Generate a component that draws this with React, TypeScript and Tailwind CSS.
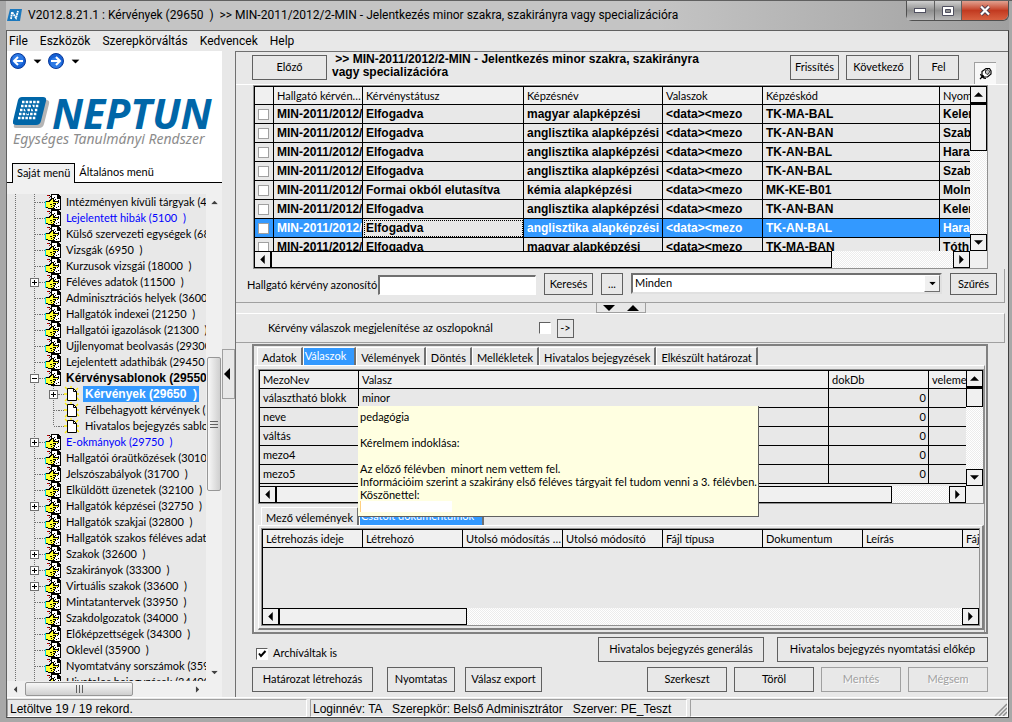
import { useId } from "react";
import type { ReactNode } from "react";

type TreeItem = {
    label: string;
    child?: boolean;
    last?: boolean;
    node?: "plus" | "minus";
    look?: "blue" | "bold" | "selected";
};

const treeItems: TreeItem[] = [
    { label: "Intézményen kívüli tárgyak (4500  )" },
    { label: "Lejelentett hibák (5100  )", look: "blue" },
    { label: "Külső szervezeti egységek (6800  )" },
    { label: "Vizsgák (6950  )" },
    { label: "Kurzusok vizsgái (18000  )" },
    { label: "Féléves adatok (11500  )", node: "plus" },
    { label: "Adminisztrációs helyek (3600  )" },
    { label: "Hallgatók indexei (21250  )" },
    { label: "Hallgatói igazolások (21300  )" },
    { label: "Ujjlenyomat beolvasás (29300  )" },
    { label: "Lejelentett adathibák (29450  )" },
    { label: "Kérvénysablonok (29550  )", node: "minus", look: "bold" },
    { label: "Kérvények (29650  )", child: true, node: "plus", look: "selected" },
    { label: "Félbehagyott kérvények (29660  )", child: true },
    { label: "Hivatalos bejegyzés sablonok (29700  )", child: true, last: true },
    { label: "E-okmányok (29750  )", node: "plus", look: "blue" },
    { label: "Hallgatói óraütközések (30100  )" },
    { label: "Jelszószabályok (31700  )" },
    { label: "Elküldött üzenetek (32100  )" },
    { label: "Hallgatók képzései (32750  )", node: "plus" },
    { label: "Hallgatók szakjai (32800  )" },
    { label: "Hallgatók szakos féléves adatai (32850  )" },
    { label: "Szakok (32600  )", node: "plus" },
    { label: "Szakirányok (33300  )", node: "plus" },
    { label: "Virtuális szakok (33600  )", node: "plus" },
    { label: "Mintatantervek (33950  )" },
    { label: "Szakdolgozatok (34000  )" },
    { label: "Előképzettségek (34300  )" },
    { label: "Oklevél (35900  )" },
    { label: "Nyomtatvány sorszámok (35950  )" },
    { label: "Hivatalos bejegyzések (34400  )" },
];

const requests = [
    ["MIN-2011/2012/2", "Elfogadva", "magyar alapképzési", "<data><mezo", "TK-MA-BAL", "Kelemen"],
    ["MIN-2011/2012/2", "Elfogadva", "anglisztika alapképzési", "<data><mezo", "TK-AN-BAN", "Szabó"],
    ["MIN-2011/2012/2", "Elfogadva", "anglisztika alapképzési", "<data><mezo", "TK-AN-BAL", "Harangi"],
    ["MIN-2011/2012/2", "Elfogadva", "anglisztika alapképzési", "<data><mezo", "TK-AN-BAL", "Szabó"],
    ["MIN-2011/2012/2", "Formai okból elutasítva", "kémia alapképzési", "<data><mezo", "MK-KE-B01", "Molnár"],
    ["MIN-2011/2012/2", "Elfogadva", "anglisztika alapképzési", "<data><mezo", "TK-AN-BAN", "Kelemen"],
    ["MIN-2011/2012/2", "Elfogadva", "anglisztika alapképzési", "<data><mezo", "TK-AN-BAL", "Harangi"],
    ["MIN-2011/2012/2", "Elfogadva", "magyar alapképzési", "<data><mezo", "TK-MA-BAN", "Tóth"],
];
const selectedRow = 6;

const answers = [
    ["választható blokk", "minor"],
    ["neve", ""],
    ["váltás", ""],
    ["mezo4", ""],
    ["mezo5", ""],
];

const documentColumns = ["Létrehozás ideje", "Létrehozó", "Utolsó módosítás ideje", "Utolsó módosító", "Fájl típusa", "Dokumentum", "Leírás"];

const tooltipText = `pedagógia

Kérelmem indoklása:

Az előző félévben  minort nem vettem fel.
Információim szerint a szakirány első féléves tárgyait fel tudom venni a 3. félévben.
Köszönettel:`;

const Triangle = ({ dir, big }: { dir: "up" | "down" | "left" | "right"; big?: boolean }) => {
    const points = {
        up: "0,5 5,0 10,5",
        down: "0,0 10,0 5,5",
        left: "5,0 5,10 0,5",
        right: "0,0 5,5 0,10",
    };
    const tall = dir === "left" || dir === "right";
    const scale = big ? 1.2 : 0.9;
    const w = tall ? 5 : 10;
    const h = tall ? 10 : 5;
    return (
        <svg width={Math.round(w * scale)} height={Math.round(h * scale)} viewBox={`0 0 ${w} ${h}`} className="shrink-0">
            <polygon points={points[dir]} fill="currentColor" />
        </svg>
    );
};

const Btn = ({ children, className, disabled }: { children: ReactNode; className?: string; disabled?: boolean }) => (
    <button
        disabled={disabled}
        className={`border border-[#606060] bg-[#e8e8e8] whitespace-nowrap disabled:border-[#a0a0a0] disabled:text-[#a0a0a0] disabled:[text-shadow:1px_1px_0_#fff] ${className}`}
    >
        {children}
    </button>
);

const BarButton = ({ dir, label }: { dir: "up" | "down" | "left" | "right"; label: string }) => (
    <button aria-label={label} className="flex size-[17px] shrink-0 items-center justify-center border border-black bg-[#f0f0f0]">
        <Triangle dir={dir} />
    </button>
);

const track = "bg-[conic-gradient(#ffffff_25%,#ececec_0_50%,#ffffff_0_75%,#ececec_0)] bg-[length:2px_2px]";

const HBar = ({ thumb }: { thumb: string }) => (
    <div className={`flex h-[17px] ${track}`}>
        <BarButton dir="left" label="Balra" />
        <div className={`border border-black bg-[#f0f0f0] ${thumb}`} />
        <div className="flex-1" />
        <BarButton dir="right" label="Jobbra" />
    </div>
);

const VBar = ({ thumb }: { thumb: string }) => (
    <div className={`flex w-[17px] shrink-0 flex-col ${track}`}>
        <BarButton dir="up" label="Fel" />
        <div className={`border border-t-2 border-black bg-[#f0f0f0] ${thumb}`} />
        <div className="flex-1" />
        <BarButton dir="down" label="Le" />
    </div>
);

const Check = ({ id, checked }: { id: string; checked?: boolean }) => (
    <span className="grid size-3 shrink-0">
        <input
            id={id}
            type="checkbox"
            defaultChecked={checked}
            className="peer col-start-1 row-start-1 size-3 appearance-none border border-t-[#606060] border-r-white border-b-white border-l-[#606060] bg-white"
        />
        <svg viewBox="0 0 12 12" className="pointer-events-none invisible col-start-1 row-start-1 size-3 peer-checked:visible">
            <path d="M3 5.5 L5 8 L9.5 3" fill="none" stroke="#000" strokeWidth="2" />
        </svg>
    </span>
);

const HandIcon = () => (
    <svg width="16" height="16" viewBox="0 0 16 16" className="shrink-0" shapeRendering="crispEdges">
        <path d="M6 0h7l3 3v13H6z" fill="#000" />
        <path d="M7 1h5v3h3v11H7z" fill="#fff" />
        <path d="M12 1v3h3M9 3h1M13 6h1M10 5h1M12 9h1M13 12h1M11 13h1M9 14h1" stroke="#000" fill="none" />
        <path d="M0 7h3l4-3h2v3h5v2h-3v2h-1v2H9v2H3l-1-1H0z" fill="#000" />
        <path d="M1 8h3l3-3h1v3h5v1H8v1h2v1H8v1h1v1H8v1H3l-1-1H1z" fill="#ffff33" />
        <path d="M5 10h2M6 12h1" stroke="#000" />
        <path d="M0 7h1v7H0z" fill="#00e0e0" />
        <path d="M4 1l2 2 4 4" stroke="#000" fill="none" />
        <path d="M2 1h2v1H2zM4 3h1v1H4z" fill="#c00000" />
    </svg>
);

const PageIcon = () => (
    <svg width="16" height="16" viewBox="0 0 16 16" className="shrink-0">
        <path d="M1 1l3 3M14 2l-3 3M0 8h4M15 8h-4M1 15l3-3M15 14l-3-3M7 0v3" stroke="#ffee00" strokeWidth="1.3" />
        <path d="M3.5 2.5h6l3 3v9h-9z" fill="#fff" stroke="#000" />
        <path d="M9.500 2.500v3h3" fill="none" stroke="#000" />
    </svg>
);

const TreeRow = ({ item }: { item: TreeItem }) => {
    const looks = {
        blue: "text-[#0000ff]",
        bold: "font-['Liberation_Sans',Arial,sans-serif] text-[12px] font-bold",
        selected: "bg-[#3399ff] font-['Liberation_Sans',Arial,sans-serif] text-[12px] font-bold text-white",
    };
    const lead = item.child ? 41 : 22;
    const dots = { stroke: "#707070", strokeDasharray: "1 1" };
    const node = (
        <svg width="11" height="16" viewBox="0 0 11 16" shapeRendering="crispEdges">
            <line x1="5.5" y1="0" x2="5.5" y2={item.last ? 8 : 16} {...dots} />
            <line x1="6" y1="8.5" x2="11" y2="8.5" {...dots} />
            {item.node && <rect x="1.5" y="4.500" width="8" height="8" fill="#fff" stroke="#707070" />}
            {item.node && <path d={item.node === "plus" ? "M3 8.500h5M5.500 6v5" : "M3 8.500h5"} stroke="#000" />}
        </svg>
    );
    return (
        <li className="flex h-4 items-center">
            <svg width={lead} height="16" className="shrink-0" shapeRendering="crispEdges">
                <line x1="8.5" y1="0" x2="8.5" y2="16" {...dots} />
                {item.child && <line x1="27.5" y1="0" x2="27.5" y2="16" {...dots} />}
            </svg>
            {item.node ? <button aria-label={item.label} className="shrink-0">{node}</button> : <span className="shrink-0">{node}</span>}
            <svg width="5" height="16" className="shrink-0" shapeRendering="crispEdges">
                <line x1="0" y1="8.5" x2="5" y2="8.5" {...dots} />
            </svg>
            {item.child ? <PageIcon /> : <HandIcon />}
            <a href="#" className={`ml-[3px] px-[2px] leading-4 whitespace-pre ${item.look ? looks[item.look] : ""}`}>{item.label}</a>
        </li>
    );
};

const NavIcon = ({ flip }: { flip?: boolean }) => (
    <svg width="16" height="16" viewBox="0 0 16 16" className={flip ? "rotate-180" : ""}>
        <circle cx="8" cy="8" r="7.500" fill="#1560d4" stroke="#0a3a9a" />
        <circle cx="8" cy="6.500" r="5.500" fill="#3d8cf0" opacity="0.6" />
        <path d="M13 8H4M8 4L4 8l4 4" fill="none" stroke="#fff" strokeWidth="2" />
    </svg>
);

const LogoMark = () => (
    <svg width="37" height="32" viewBox="0 0 37 32" className="shrink-0">
        <path d="M9 3h24q4 0 3 4l-5 20q-1 4-5 4H3q-3 0-2-3z" fill="#b5b5b5" />
        <path d="M9 0h21q4 0 3 4l-5 20q-1 4-5 4H3q-4 0-3-4L5 3q1-3 4-3z" fill="#0066a8" />
        <path d="M9 5h18M8 9h18M7 13h18M6 17h18M5 21h18" stroke="#fff" strokeWidth="2.500" strokeDasharray="2.500 1.200" />
        <path d="M12 11l3 6M18 7l3 7" stroke="#0066a8" strokeWidth="1.500" />
    </svg>
);

const Sidebar = () => (
    <aside className="flex w-[215px] shrink-0 flex-col bg-white">
        <div className="flex h-5 items-center pl-[3px]">
            <button aria-label="Vissza"><NavIcon /></button>
            <button aria-label="Vissza lista" className="ml-[7px] scale-90"><Triangle dir="down" /></button>
            <button aria-label="Előre" className="ml-1.5"><NavIcon flip /></button>
            <button aria-label="Előre lista" className="ml-[7px] scale-90"><Triangle dir="down" /></button>
        </div>
        <div className="mt-6 flex h-9 items-center pl-1.5 font-['Noto_Sans',sans-serif]">
            <LogoMark />
            <span className="ml-0.5 text-[41px] leading-9 font-bold text-[#0066a8] italic">NEPTUN</span>
        </div>
        <p className="pl-1.5 font-['Noto_Sans',sans-serif] text-[14px] leading-4 whitespace-nowrap text-[#8c8c8c] italic">Egységes Tanulmányi Rendszer</p>
        <div className="mt-4 flex h-5 border-b border-black pl-[5px]">
            <button className="-mb-px h-5 border border-b-0 border-black bg-[#f0f0f0] px-1">Saját menü</button>
            <button className="px-1">Általános menü</button>
        </div>
        <div className="flex min-h-0 flex-1 flex-col bg-[#e8e8e8]">
            <div className="h-[11px] shrink-0 bg-[#f0f0f0]" />
            <div className="flex min-h-0 flex-1">
                <ul className="min-w-0 flex-1 overflow-hidden">
                    {treeItems.map((item) => <TreeRow key={item.label} item={item} />)}
                </ul>
                <div className="flex w-4 shrink-0 flex-col items-center bg-[#f0f0f0] text-[#404040]">
                    <button aria-label="Fel" className="flex h-[17px] w-full items-center justify-center"><span className="scale-75"><Triangle dir="up" /></span></button>
                    <div className="h-[146px]" />
                    <div className="flex h-[134px] w-[14px] flex-col items-center justify-center gap-0.5 rounded-xs border border-[#979797] bg-linear-to-r from-[#f8f8f8] to-[#cfcfcf]">
                        <div className="h-px w-2 bg-[#606060]" />
                        <div className="h-px w-2 bg-[#606060]" />
                        <div className="h-px w-2 bg-[#606060]" />
                    </div>
                    <div className="flex-1" />
                    <button aria-label="Le" className="flex h-[17px] w-full items-center justify-center"><span className="scale-75"><Triangle dir="down" /></span></button>
                </div>
            </div>
            <div className="flex h-4 shrink-0 items-center bg-[#f0f0f0] pr-4 text-[#404040]">
                <button aria-label="Balra" className="flex w-[17px] justify-center"><span className="scale-75"><Triangle dir="left" /></span></button>
                <div className="ml-px flex h-[14px] w-[108px] items-center justify-center gap-0.5 rounded-xs border border-[#979797] bg-linear-to-b from-[#f8f8f8] to-[#cfcfcf]">
                    <div className="h-2 w-px bg-[#606060]" />
                    <div className="h-2 w-px bg-[#606060]" />
                    <div className="h-2 w-px bg-[#606060]" />
                </div>
                <div className="flex-1" />
                <button aria-label="Jobbra" className="flex w-[17px] justify-center"><span className="scale-75"><Triangle dir="right" /></span></button>
            </div>
        </div>
    </aside>
);

const cell = "h-[19px] overflow-hidden border-r border-b border-black p-0 pl-[3px] text-left leading-4 whitespace-nowrap";
const head = "h-[18px] overflow-hidden border-b border-black bg-[#f0f0f0] p-0 pl-[3px] text-left leading-4 font-normal whitespace-nowrap";
const headCol = `${head} border-r text-ellipsis`;

const RequestGrid = () => (
    <div className="mr-[20px] ml-[17px] flex h-[184px] border border-[#909090]">
        <div className="flex min-w-0 flex-1 flex-col">
            <div className="min-h-0 flex-1 overflow-hidden border-t border-l border-black">
                <table className="w-full table-fixed border-separate border-spacing-0">
                    <colgroup>
                        <col className="w-[19px]" />
                        <col className="w-[89px]" />
                        <col className="w-[161px]" />
                        <col className="w-[139px]" />
                        <col className="w-[100px]" />
                        <col className="w-[177px]" />
                        <col />
                    </colgroup>
                    <thead>
                        <tr>
                            <th className={headCol} />
                            <th className={headCol}>Hallgató kérvény azonosító</th>
                            <th className={headCol}>Kérvénystátusz</th>
                            <th className={headCol}>Képzésnév</th>
                            <th className={headCol}>Valaszok</th>
                            <th className={headCol}>Képzéskód</th>
                            <th className={head}>Nyomtatás</th>
                        </tr>
                    </thead>
                    <tbody className="font-['Liberation_Sans',Arial,sans-serif] text-[12px] font-bold">
                        {requests.map((row, i) => (
                            <tr key={i} className={i === selectedRow ? "bg-[#3399ff] text-white" : ""}>
                                <td className={cell}>
                                    <input type="checkbox" aria-label={row[4]} className="block size-[11px] appearance-none border border-[#a0a0a0] bg-white" />
                                </td>
                                {row.map((value, j) => (
                                    <td
                                        key={j}
                                        className={`${cell} ${j === 5 ? "border-r-0" : ""} ${i === selectedRow && j === 1 ? "bg-[#e8e8e8] text-black outline-1 -outline-offset-2 outline-dotted" : ""}`}
                                    >
                                        {value}
                                    </td>
                                ))}
                            </tr>
                        ))}
                    </tbody>
                </table>
            </div>
            <HBar thumb="w-[561px]" />
        </div>
        <div className="flex flex-col bg-[#f0f0f0] pb-[17px]">
            <div className="flex flex-1"><VBar thumb="h-[48px]" /></div>
        </div>
    </div>
);

const Tab = ({ children, active }: { children: ReactNode; active?: boolean }) => (
    <button
        className={`border-t border-r-2 border-l border-t-white border-r-[#707070] border-l-white whitespace-nowrap ${active ? "h-[19px] bg-[#3399ff] pr-2 pb-0.5 pl-px text-white" : "h-[18px] px-1 pt-0.5"}`}
    >
        {children}
    </button>
);

const AnswerGrid = () => (
    <div className="relative flex h-[135px] shrink-0 border border-[#909090]">
        <div className="flex min-w-0 flex-1 flex-col">
            <div className="min-h-0 flex-1 overflow-hidden border-t border-l border-black">
                <table className="w-full table-fixed border-separate border-spacing-0">
                    <colgroup>
                        <col className="w-[99px]" />
                        <col />
                        <col className="w-[100px]" />
                        <col className="w-[37px]" />
                    </colgroup>
                    <thead>
                        <tr>
                            <th className={headCol}>MezoNev</th>
                            <th className={headCol}>Valasz</th>
                            <th className={headCol}>dokDb</th>
                            <th className={head}>velemeny</th>
                        </tr>
                    </thead>
                    <tbody>
                        {answers.map(([name, value]) => (
                            <tr key={name}>
                                <td className={cell}>{name}</td>
                                <td className={cell}>{value}</td>
                                <td className={cell}><span className="block pr-0.5 text-right">0</span></td>
                                <td className={`${cell} border-r-0`} />
                            </tr>
                        ))}
                    </tbody>
                </table>
            </div>
            <HBar thumb="w-[616px]" />
        </div>
        <div className="flex flex-col bg-[#f0f0f0] pb-[17px]">
            <div className="flex flex-1"><VBar thumb="h-5" /></div>
        </div>
        <div role="tooltip" className="absolute top-9 left-[99px] z-10 w-max border-r border-b border-[#606060] bg-[#ffffe1] py-1 pr-px pl-0.5 leading-[13px] whitespace-pre">
            {tooltipText}
            <div className="h-[11px] w-[92px] border-l border-[#ffd080] bg-white" />
        </div>
    </div>
);

const DocumentGrid = () => (
    <div className="flex min-h-0 flex-1 flex-col border border-[#909090]">
        <div className="min-h-0 flex-1 overflow-hidden border-t border-l border-black">
            <table className="w-full table-fixed border-separate border-spacing-0">
                <thead>
                    <tr>
                        {documentColumns.map((name) => <th key={name} className={`${headCol} w-[100px]`}>{name}</th>)}
                        <th className={head}>Fájl</th>
                    </tr>
                </thead>
            </table>
        </div>
        <HBar thumb="w-[188px]" />
    </div>
);

const Workspace = () => {
    const id = useId();
    return (
        <main className="flex min-w-0 flex-1 flex-col border-t border-l border-t-[#707070] border-l-[#707070]">
            <header className="flex h-[33px] shrink-0 border-b border-white pt-[3px] pr-[12px] pl-4">
                <Btn className="h-[25px] w-[75px]">Előző</Btn>
                <h1 className="-mt-[3px] ml-[5px] max-w-[380px] pt-px font-['Liberation_Sans',Arial,sans-serif] text-[12px] leading-[13px] font-bold">{"\u00a0>> MIN-2011/2012/2-MIN - Jelentkezés minor szakra, szakirányra vagy specializációra"}</h1>
                <div className="ml-auto flex gap-[7px]">
                    <Btn className="h-[25px] w-[49px]">Frissítés</Btn>
                    <Btn className="h-[25px] w-[65px]">Következő</Btn>
                    <Btn className="h-[25px] w-[41px]">Fel</Btn>
                    <button aria-label="Rögzítés" className="mt-[7px] ml-2 flex size-[22px] items-center justify-center border-t border-l border-[#a0a0a0] bg-[#f8f8f8]">
                        <svg width="13" height="13" viewBox="0 0 13 13">
                            <path d="M3 4.500L7 1.500h3.500L12 4v3l-3.500 3H5L3 8z" fill="#fff" stroke="#000" strokeWidth="1.200" />
                            <path d="M6.500 3.500L9 2.500l1.500 1.500-.5 2.500L8 7.500 6.500 6z" fill="#c8c8c8" stroke="#000" strokeWidth="0.800" />
                            <path d="M4.500 8.500L1 12M1.500 7q1.500 4 5.500 4.500" fill="none" stroke="#000" strokeWidth="1.200" />
                        </svg>
                    </button>
                </div>
            </header>
            <RequestGrid />
            <div className="mr-[3px] flex h-[34px] shrink-0 items-start border-r border-b border-[#a0a0a0] pt-1 pr-[7px] pl-[11px]">
                <label htmlFor={`${id}-search`} className="w-[131px] shrink-0 leading-6 whitespace-nowrap">Hallgató kérvény azonosító</label>
                <input id={`${id}-search`} className="mt-0.5 h-5 w-[158px] border-t-2 border-r border-b border-l-2 border-t-[#707070] border-r-white border-b-white border-l-[#707070] bg-white px-1" />
                <Btn className="ml-2 h-[22px] w-[49px]">Keresés</Btn>
                <Btn className="ml-2 h-[22px] w-[22px]">...</Btn>
                <div className="relative ml-2 flex-1">
                    <select aria-label="Szűrő" className="block h-[21px] w-full appearance-none border-2 border-t-[#707070] border-r-[#e0e0e0] border-b-[#e0e0e0] border-l-[#707070] bg-white px-0.5">
                        <option>Minden</option>
                    </select>
                    <span className="pointer-events-none absolute top-0.5 right-0.5 flex h-[17px] w-4 items-center justify-center border border-t-white border-r-[#707070] border-b-[#707070] border-l-white bg-[#f0f0f0]">
                        <span className="scale-75"><Triangle dir="down" /></span>
                    </span>
                </div>
                <Btn className="ml-2 h-[22px] w-[47px]">Szűrés</Btn>
            </div>
            <div className="flex h-[10px] shrink-0 justify-center pr-0.5">
                <button aria-label="Osztó" className="flex w-[50px] items-center justify-center gap-3 border border-t-0 border-[#a0a0a0]">
                    <Triangle dir="down" big />
                    <Triangle dir="up" big />
                </button>
            </div>
            <div className="mr-[3px] flex h-[30px] shrink-0 items-center border-t border-r border-b border-t-white border-r-[#a0a0a0] border-b-[#a0a0a0] pl-8">
                <label htmlFor={`${id}-show`} className="w-[271px] whitespace-nowrap">Kérvény válaszok megjelenítése az oszlopoknál</label>
                <Check id={`${id}-show`} />
                <Btn className="ml-1.5 h-[19px] w-[17px]">{"->"}</Btn>
            </div>
            <section className="mt-px mr-[20px] ml-4 flex min-h-0 flex-1 flex-col border-2 border-[#808080]">
                <div className="flex h-[19px] shrink-0 items-start pt-px pl-[3px]">
                    <Tab>Adatok</Tab>
                    <Tab active>Válaszok</Tab>
                    <Tab>Vélemények</Tab>
                    <Tab>Döntés</Tab>
                    <Tab>Mellékletek</Tab>
                    <Tab>Hivatalos bejegyzések</Tab>
                    <Tab>Elkészült határozat</Tab>
                </div>
                <div className="mr-px flex min-h-0 flex-1 flex-col border-t border-r border-l border-t-white border-r-[#909090] border-l-white pt-[3px] pl-[3px]">
                    <AnswerGrid />
                    <div className="mt-[3px] flex h-[18px] shrink-0 items-start pl-[3px]">
                        <Tab>Mező vélemények</Tab>
                        <Tab active>Csatolt dokumentumok</Tab>
                    </div>
                    <div className="mb-0.5 flex min-h-0 flex-1 flex-col border-t border-r-2 border-b-2 border-l border-t-white border-r-[#808080] border-b-[#808080] border-l-white p-0.5">
                        <DocumentGrid />
                    </div>
                </div>
            </section>
            <footer className="mr-[20px] ml-4 flex h-[63px] shrink-0 flex-col gap-[5px] pt-[3px]">
                <div className="flex gap-[13px]">
                    <div className="mt-2 mr-auto flex items-center gap-[5px] pl-1">
                        <Check id={`${id}-archive`} checked />
                        <label htmlFor={`${id}-archive`}>Archíváltak is</label>
                    </div>
                    <Btn className="h-[25px] w-[166px]">Hivatalos bejegyzés generálás</Btn>
                    <Btn className="h-[25px] w-[211px]">Hivatalos bejegyzés nyomtatási előkép</Btn>
                </div>
                <div className="flex gap-[7px]">
                    <Btn className="h-[25px] w-[121px]">Határozat létrehozás</Btn>
                    <Btn className="ml-[7px] h-[25px] w-[68px]">Nyomtatas</Btn>
                    <Btn className="mr-auto ml-[3px] h-[25px] w-[77px]">Válasz export</Btn>
                    <Btn className="h-[25px] w-[80px]">Szerkeszt</Btn>
                    <Btn className="h-[25px] w-[80px]">Töröl</Btn>
                    <Btn className="h-[25px] w-[80px]" disabled>Mentés</Btn>
                    <Btn className="h-[25px] w-[80px]" disabled>Mégsem</Btn>
                </div>
            </footer>
        </main>
    );
};

const TitleBar = () => (
    <div className="flex h-[29px] shrink-0 items-start bg-linear-to-r from-[#c4c4c4] via-[#c4c4c4] via-65% to-[#a0a0a0] pl-[1px] font-[Roboto,sans-serif] text-[12px]">
        <svg width="15" height="15" viewBox="0 0 15 15" className="mt-[7px]">
            <path d="M3 1h12l-2 12H0z" fill="#1b78bd" />
            <path d="M4 11l1-7 4 6 2-7" fill="none" stroke="#fff" strokeWidth="1.800" strokeDasharray="2 0.500" />
        </svg>
        <span className="ml-[6px] leading-[29px] whitespace-pre">{"V2012.8.21.1 : Kérvények (29650  )  >> MIN-2011/2012/2-MIN - Jelentkezés minor szakra, szakirányra vagy specializációra"}</span>
        <div className="ml-auto flex h-5 w-[103px] shrink-0 rounded-b-md border border-t-0 border-[#505050] text-[#f8f8f8]">
            <button aria-label="Kis méret" className="flex flex-1 items-center justify-center border-r border-[#606060] bg-linear-to-b from-[#d0d0d0] via-[#909090] to-[#b8b8b8]">
                <svg width="12" height="5"><rect x="0.500" y="0.500" width="11" height="4" fill="#fff" stroke="#505060" /></svg>
            </button>
            <button aria-label="Teljes méret" className="flex flex-1 items-center justify-center border-r border-[#606060] bg-linear-to-b from-[#d0d0d0] via-[#909090] to-[#b8b8b8]">
                <svg width="12" height="10"><path d="M0.500 0.500h11v9h-11zM3.500 3.500h5v3h-5z" fill="#fff" fillRule="evenodd" stroke="#505060" /></svg>
            </button>
            <button aria-label="Bezárás" className="flex w-[46px] items-center justify-center rounded-br-md bg-linear-to-b from-[#e0a090] via-[#c23a20] to-[#d86040]">
                <svg width="12" height="11" viewBox="0 0 12 11">
                    <path d="M2 1.500l8 8M10 1.500l-8 8" stroke="#504050" strokeWidth="4" />
                    <path d="M2 1.500l8 8M10 1.500l-8 8" stroke="#fff" strokeWidth="2.200" />
                </svg>
            </button>
        </div>
    </div>
);

const pane = "border border-t-[#a0a0a0] border-r-white border-b-white border-l-[#a0a0a0] pl-0.5 whitespace-pre";

const App = () => {
    return (
        <div className="flex h-screen flex-col overflow-hidden border-t border-[#606060] bg-[#a8a8a8] pr-[3px] pb-1 pl-1.5 font-[Lato,'Liberation_Sans',sans-serif] text-[11px] text-black">
            <TitleBar />
            <div className="flex min-h-0 flex-1 flex-col border border-t-[#606060] border-r-[#404040] border-b-[#404040] border-l-[#606060] bg-[#e8e8e8]">
                <nav className="flex h-5 shrink-0 items-center gap-3 pl-[2px] font-[Roboto,sans-serif] text-[12px]">
                    <a href="#">File</a>
                    <a href="#">Eszközök</a>
                    <a href="#">Szerepkörváltás</a>
                    <a href="#">Kedvencek</a>
                    <a href="#">Help</a>
                </nav>
                <div className="flex min-h-0 flex-1">
                    <Sidebar />
                    <div className="flex w-[13px] shrink-0 flex-col">
                        <div className="h-[298px]" />
                        <button aria-label="Menü elrejtése" className="flex h-[50px] items-center border border-[#a0a0a0] pl-px">
                            <Triangle dir="left" big />
                        </button>
                    </div>
                    <Workspace />
                </div>
                <div className="flex h-5 shrink-0 gap-[3px] border-t border-white pt-px font-['Liberation_Sans',Arial,sans-serif] text-[12px] leading-[18px]">
                    <div className={`w-[300px] ${pane}`}>Letöltve 19 / 19 rekord.</div>
                    <div className={`w-[377px] ${pane}`}>{"Loginnév: TA   Szerepkör: Belső Adminisztrátor   Szerver: PE_Teszt"}</div>
                    <div className={`flex flex-1 items-end justify-end ${pane}`}>
                        <svg width="13" height="13" className="shrink-0"><path d="M1 13L13 1M5 13l8-8M9 13l4-4" stroke="#909090" strokeWidth="1.500" /></svg>
                    </div>
                </div>
            </div>
        </div>
    );
};

export default App;
